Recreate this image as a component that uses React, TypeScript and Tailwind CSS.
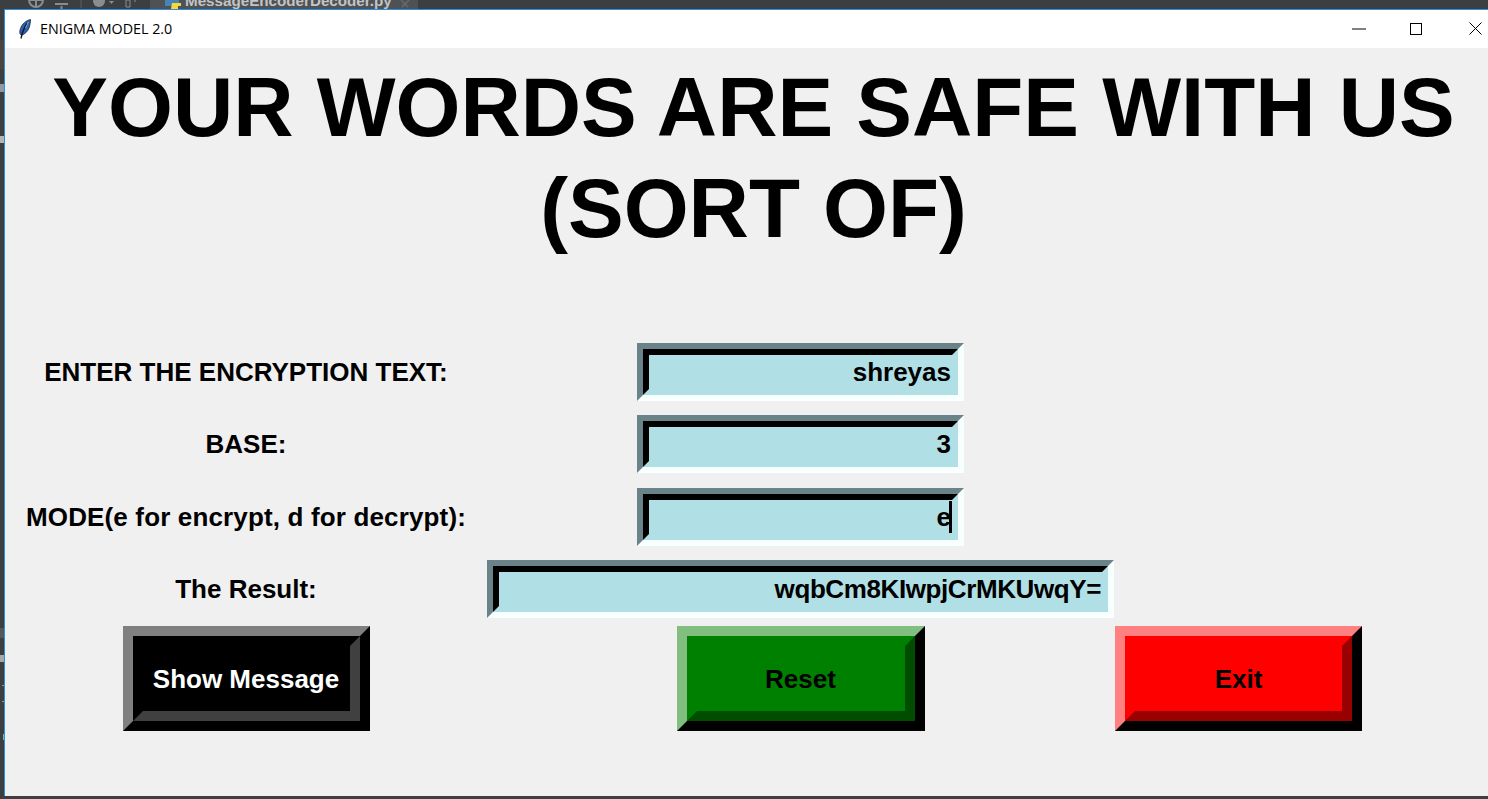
const sans = "font-['Liberation_Sans',Arial,sans-serif]";

function Entry({ value, wide, cursor }: { value: string; wide?: boolean; cursor?: boolean }) {
  return (
    <div
      className={`${wide ? 'w-[627px]' : 'w-[327px]'} h-[58px] justify-self-center border-[6px] border-t-[#6a8389] border-l-[#6a8389] border-r-[#f7ffff] border-b-[#f7ffff]`}
    >
      <div className="relative h-full border-[6px] border-t-black border-l-black border-r-[#b0e0e6] border-b-[#b0e0e6] bg-[#b0e0e6] flex items-center justify-end pr-[1px]">
        <span className={`${wide ? 'tracking-[-0.4px]' : ''} text-[26px] leading-none font-bold text-black`}>{value}</span>
        {cursor && <div className="absolute right-0 top-[1px] bottom-[1px] w-[3px] bg-black" />}
      </div>
    </div>
  );
}

function Bevel({ label, outer, inner, bg, text, width }: { label: string; outer: string; inner: string; bg: string; text: string; width: string }) {
  return (
    <div className={`${width} h-[105px] justify-self-center border-[10px] border-b-black border-r-black ${outer}`}>
      <div className={`h-full border-[10px] ${inner} ${bg} flex items-center justify-center`}>
        <span className={`text-[26px] leading-none font-bold ${text}`}>{label}</span>
      </div>
    </div>
  );
}

function Label({ children, spaced }: { children: string; spaced?: boolean }) {
  return <div className={`${spaced ? 'tracking-[0.15px]' : ''} text-[26px] leading-none font-bold text-black text-center self-center`}>{children}</div>;
}

function Toolbar() {
  return (
    <div className="h-[9px] shrink-0 overflow-hidden flex items-start">
      <svg width="150" height="9" viewBox="0 0 150 9" className="shrink-0">
        <g fill="none" stroke="#8a8d8f" strokeWidth="2">
          <circle cx="36" cy="0" r="7" />
          <path d="M36-7V7M29 0h14" />
          <path d="M55 4h13M61.500 6v3" />
        </g>
        <path d="M81 0v8" stroke="#5c5f61" strokeWidth="1" />
        <circle cx="99" cy="1" r="6" fill="#8a8d8f" />
        <path d="M109 1h5l-2.500 3z" fill="#8a8d8f" />
        <path d="M126 0h4v7h-4z" fill="none" stroke="#8a8d8f" />
        <path d="M135 0v2" stroke="#8a8d8f" />
      </svg>
      <div className="w-[268px] h-[9px] bg-[#4e5254] overflow-hidden relative flex">
        <svg width="18" height="9" viewBox="0 0 18 9" className="ml-[13px]">
          <path d="M2 0h14v3H9v3H2z" fill="#4584b6" />
          <path d="M9 3h9v3h-3v3H8z" fill="#ffd43b" />
        </svg>
        <span className="absolute left-[35px] bottom-[1px] text-[15.2px] leading-none font-bold text-[#c4c4c4] whitespace-nowrap">MessageEncoderDecoder.py</span>
        <svg width="10" height="9" viewBox="0 0 10 9" className="absolute left-[250px] top-0">
          <path d="M1 0l7 7M9 0L2 7" stroke="#6b6e70" strokeWidth="1.200" fill="none" />
        </svg>
      </div>
    </div>
  );
}

function SideStrip() {
  return (
    <div className="relative w-[4px] shrink-0 mb-[3px]">
      <div className="absolute left-0 top-[31px] w-[4px] h-[29px] bg-[#4a4440]" />
      <div className="absolute left-0 top-[75px] w-[4px] h-[8px] bg-[#8d9aa6]" />
      <div className="absolute left-0 top-[127px] w-[4px] h-[7px] bg-[#b5b5b5]" />
      <div className="absolute left-0 top-[619px] w-[4px] h-[10px] bg-[#55585a]" />
      <div className="absolute left-0 top-[646px] w-[4px] h-[7px] bg-[#a8a8a8]" />
      <div className="absolute left-[2px] top-[676px] w-[2px] h-[1px] bg-[#999999]" />
      <div className="absolute left-[2px] top-[692px] w-[2px] h-[1px] bg-[#999999]" />
      <div className="absolute left-[3px] top-[725px] w-[1px] h-[6px] bg-[#5cc4c4]" />
    </div>
  );
}

export default function App() {
  return (
    <div className={`w-[1488px] h-[799px] overflow-hidden bg-[#3c3f41] flex flex-col ${sans}`}>
      {/* IDE behind the window */}
      <Toolbar />

      <div className="flex-1 flex min-h-0">
        <SideStrip />
        <div className="flex-1 mb-[3px] border-l border-t border-[#2b90d9] flex flex-col min-h-0">
          {/* title bar */}
          <div className="h-[38px] shrink-0 bg-white flex items-center pb-[1px]">
            <svg width="14" height="20" viewBox="0 0 14 20" className="ml-[13px]">
              <path d="M12.500 0.500C8 1.500 4 5 2.500 9.500 1.500 12 1.500 14 2.500 15.500L4 16c3-1 5.500-3.500 7-7 1-3 1.500-6 1.500-8.500z" fill="#2f62ad" stroke="#16243c" strokeWidth="0.800" />
              <path d="M9 4.500C6.500 8 4.500 12 3 19.500" stroke="#0d1626" strokeWidth="1.300" fill="none" />
              <path d="M10.500 3L7.500 9" stroke="#7fa8dc" strokeWidth="1" fill="none" />
            </svg>
            <span className="ml-[8px] text-[14.300px] text-black font-['Open_Sans',sans-serif]">ENIGMA MODEL 2.0</span>
            <svg width="14" height="2" viewBox="0 0 14 2" className="ml-auto"><path d="M0 1h14" stroke="#000" /></svg>
            <svg width="12" height="12" viewBox="0 0 12 12" className="ml-[44px]"><rect x="0.500" y="0.500" width="11" height="11" fill="none" stroke="#000" /></svg>
            <svg width="13" height="13" viewBox="0 0 13 13" className="ml-[47px] mr-[6px]"><path d="M0.500 0.500l12 12M12.500 0.500l-12 12" stroke="#000" /></svg>
          </div>

          {/* window body */}
          <div className="flex-1 bg-[#f0f0f0] min-h-0">
            <h1 className="pl-[14px] pt-[9px] text-[83.500px] leading-[101px] font-bold text-black text-center whitespace-nowrap">
              YOUR WORDS ARE SAFE WITH US
              <br />
              (SORT OF)
            </h1>
            <div className="mt-[84px] grid grid-cols-[482px_627px_249px] gap-y-[14.400px] items-center">
              <Label>ENTER THE ENCRYPTION TEXT:</Label>
              <Entry value="shreyas" />
              <div />
              <Label>BASE:</Label>
              <Entry value="3" />
              <div />
              <Label spaced>MODE(e for encrypt, d for decrypt):</Label>
              <Entry value="e" cursor />
              <div />
              <Label>The Result:</Label>
              <Entry value="wqbCm8KIwpjCrMKUwqY=" wide />
              <div />
            </div>
            <div className="mt-[8px] grid grid-cols-[482px_627px_249px]">
              <Bevel width="w-[247px]" label="Show Message" outer="border-t-[#808080] border-l-[#808080]" inner="border-t-black border-l-black border-r-[#404040] border-b-[#404040]" bg="bg-black" text="text-white" />
              <Bevel width="w-[248px]" label="Reset" outer="border-t-[#80bf80] border-l-[#80bf80]" inner="border-t-[#008000] border-l-[#008000] border-r-[#004d00] border-b-[#004d00]" bg="bg-[#008000]" text="text-black" />
              <Bevel width="w-[247px]" label="Exit" outer="border-t-[#ff8080] border-l-[#ff8080]" inner="border-t-[#ff0000] border-l-[#ff0000] border-r-[#990000] border-b-[#990000]" bg="bg-[#ff0000]" text="text-black" />
            </div>
          </div>
        </div>
      </div>
    </div>
  );
}
